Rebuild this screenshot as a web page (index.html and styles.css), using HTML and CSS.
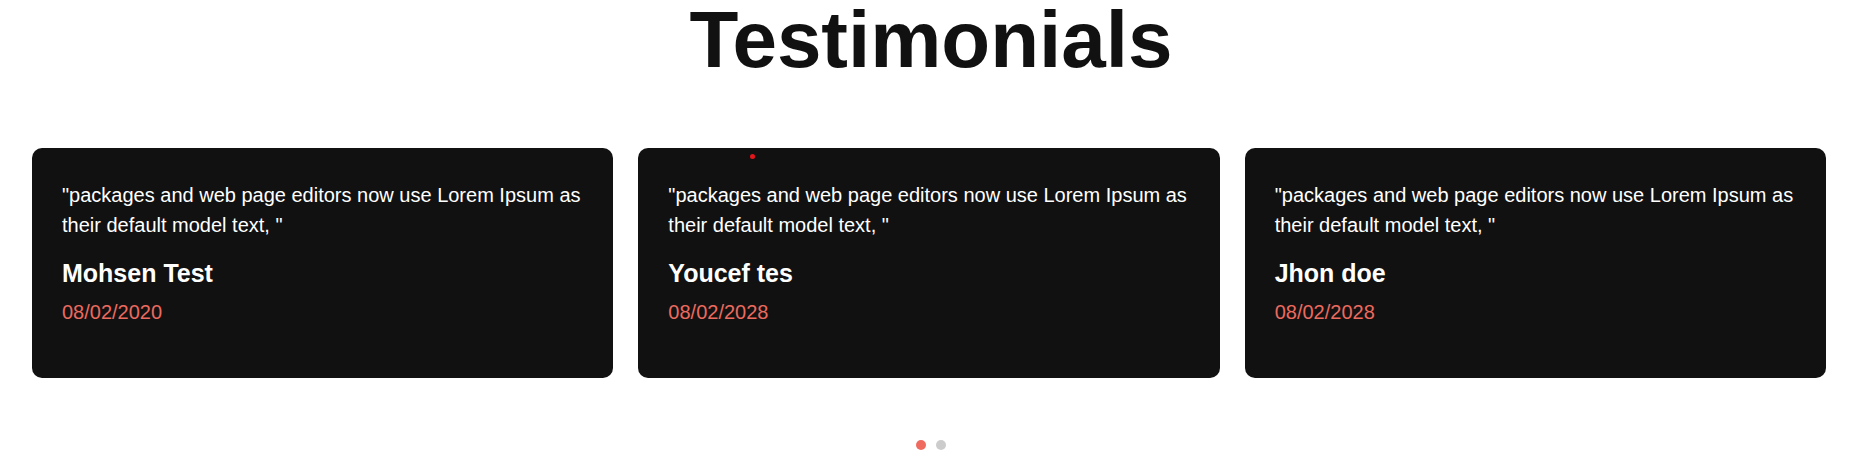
FILE: index.html
```html
<!DOCTYPE html>
<html lang="en">
<head>
<meta charset="utf-8">
<title>Testimonials</title>
<link rel="stylesheet" href="styles.css">
</head>
<body>
<section class="testimonials">
  <h1 class="title">Testimonials</h1>
  <div class="track">
    <div class="card">
      <p class="quote">"packages and web page editors now use Lorem Ipsum as their default model text, "</p>
      <h3 class="name">Mohsen Test</h3>
      <p class="date">08/02/2020</p>
    </div>
    <div class="card">
      <span class="marker"></span>
      <p class="quote">"packages and web page editors now use Lorem Ipsum as their default model text, "</p>
      <h3 class="name">Youcef tes</h3>
      <p class="date">08/02/2028</p>
    </div>
    <div class="card">
      <p class="quote">"packages and web page editors now use Lorem Ipsum as their default model text, "</p>
      <h3 class="name">Jhon doe</h3>
      <p class="date">08/02/2028</p>
    </div>
  </div>
  <div class="dots">
    <span class="dot active"></span>
    <span class="dot"></span>
  </div>
</section>
</body>
</html>
```
FILE: styles.css
```css
html, body {
  margin: 0;
  padding: 0;
  background: #fff;
}
body {
  font-family: "Liberation Sans", Arial, Helvetica, sans-serif;
  color: #111;
}
.testimonials {
  display: flex;
  flex-direction: column;
}
.title {
  margin: 0;
  font-size: 80px;
  line-height: 80px;
  font-weight: 700;
  text-align: center;
  color: #111;
}
.track {
  display: grid;
  grid-template-columns: repeat(3, 1fr);
  gap: 25px;
  padding: 0 36px 0 32px;
  margin-top: 68px;
}
.card {
  position: relative;
  background: #111;
  border-radius: 10px;
  padding: 32px 30px 0 30px;
  height: 230px;
  box-sizing: border-box;
  color: #fff;
}
.marker {
  position: absolute;
  left: 112px;
  top: 6px;
  width: 5px;
  height: 5px;
  border-radius: 50%;
  background: #e3161c;
}
.quote {
  margin: 0;
  font-size: 20px;
  line-height: 30px;
}
.name {
  margin: 18px 0 0 0;
  font-size: 25px;
  line-height: 30px;
  font-weight: 700;
}
.date {
  margin: 9px 0 0 0;
  font-size: 20px;
  line-height: 30px;
  color: #ec6a5e;
}
.dots {
  display: flex;
  justify-content: center;
  gap: 10px;
  margin-top: 62px;
  padding-right: 1px;
}
.dot {
  width: 10px;
  height: 10px;
  border-radius: 50%;
  background: #cccccc;
}
.dot.active {
  background: #ef6b60;
}
```
